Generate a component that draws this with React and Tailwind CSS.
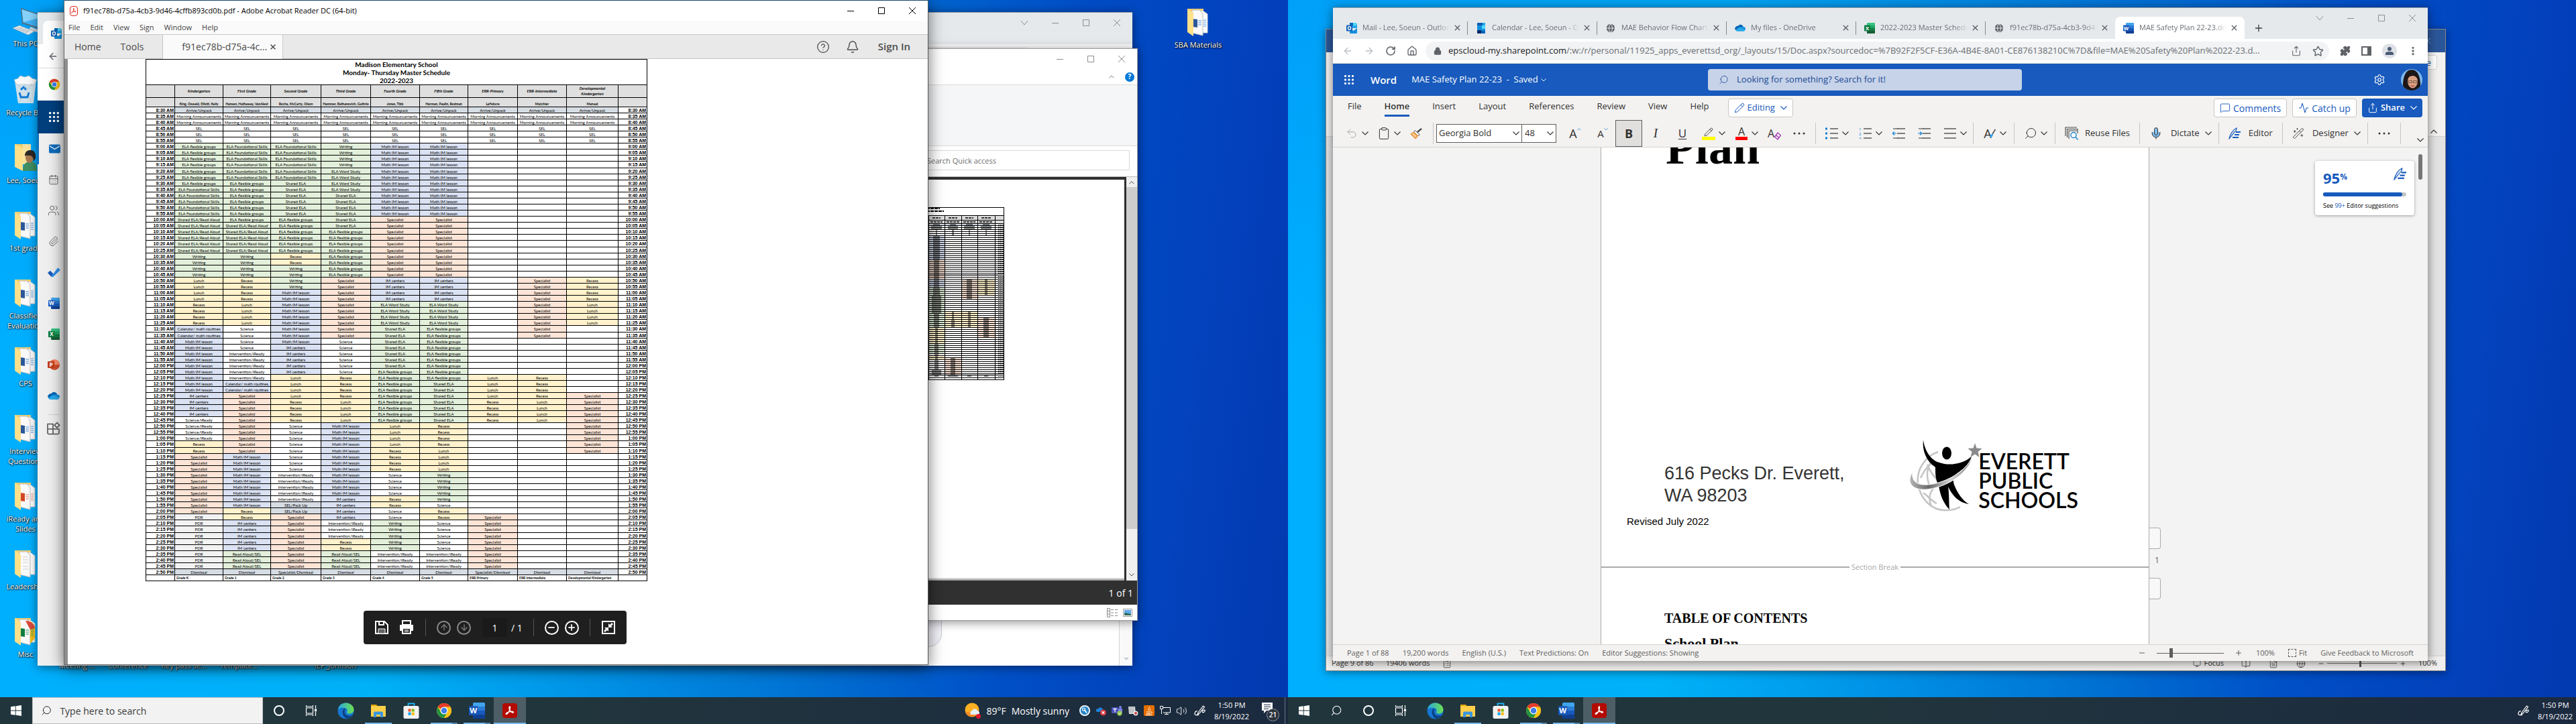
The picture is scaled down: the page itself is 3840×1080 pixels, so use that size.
import React from "react";
import {
  ArrowLeft,
  ArrowRight,
  ArrowUp,
  ArrowDown,
  RotateCw,
  House,
  Lock,
  Star,
  Puzzle,
  EllipsisVertical,
  Settings,
  Bell,
  CircleHelp,
  Paperclip,
  Users,
  Volume2,
  X,
  Plus,
  Minus,
  Search,
  ClipboardList,
  Clipboard,
  Undo2,
  Globe,
  Mic,
  MessageSquare,
  Share,
  Pencil,
  Activity,
  WandSparkles,
  CalendarDays,
  BookOpen,
  FileText,
  Monitor,
} from "lucide-react";
import clsx from "clsx";

/* ---------- schedule data: [label, number of five minute rows] ---------- */

const START = [
  ["Arrive/Unpack", 1],
  ["Morning Announcements", 2],
  ["SEL", 3],
];

const COLUMNS = [
  {
    grade: "Kindergarten",
    staff: "King, Oswald, Elliott, Kelly",
    foot: "Grade K",
    col: "w-[72px]",
    width: 72,
    blocks: [
      ["ELA flexible groups", 7], ["ELA Foundational Skills", 5], ["Shared ELA/Read Aloud", 6],
      ["Writing", 4], ["Lunch", 4], ["Recess", 4], ["Calendar/ math routines", 2],
      ["Math IM lesson", 9], ["IM centers", 4], ["Science/iReady", 4], ["Recess", 2],
      ["Specialist", 10], ["PDR", 9], ["Dismissal", 1],
    ],
  },
  {
    grade: "First Grade",
    staff: "Hansen, Hathaway, VanAlest",
    foot: "Grade 1",
    col: "w-[71px]",
    width: 71,
    blocks: [
      ["ELA Foundational Skills", 6], ["ELA flexible groups", 7], ["Shared ELA/Read Aloud", 5],
      ["Writing", 4], ["Recess", 4], ["Lunch", 4], ["Science", 4], ["Intervention/iReady", 5],
      ["Calendar/ math routines", 2], ["Specialist", 10], ["Math IM lesson", 9], ["Recess", 2],
      ["IM centers", 5], ["Read Aloud/SEL", 3], ["Dismissal", 1],
    ],
  },
  {
    grade: "Second Grade",
    staff: "Rocha, McCarty, Olson",
    foot: "Grade 2",
    col: "w-[75px]",
    width: 75,
    blocks: [
      ["ELA Foundational Skills", 6], ["Shared ELA", 6], ["ELA flexible groups", 6],
      ["Recess", 2], ["Writing", 4], ["Math IM lesson", 9], ["IM centers", 5], ["Lunch", 4],
      ["Recess", 4], ["Science", 8], ["Intervention/iReady", 5], ["SEL/Pack Up", 2],
      ["Specialist", 9], ["Specialist/Dismissal", 1],
    ],
  },
  {
    grade: "Third Grade",
    staff: "Hammer, Bathanovich, Guthrie",
    foot: "Grade 3",
    col: "w-[74px]",
    width: 74,
    blocks: [
      ["Writing", 4], ["ELA Word Study", 4], ["Shared ELA", 6], ["ELA flexible groups", 8],
      ["Specialist", 10], ["Science", 6], ["Recess", 4], ["Lunch", 4], ["Math IM lesson", 12],
      ["IM centers", 4], ["Intervention/iReady", 3], ["Recess", 2], ["Read Aloud/SEL", 3],
      ["Dismissal", 1],
    ],
  },
  {
    grade: "Fourth Grade",
    staff: "Jones, Tibb",
    foot: "Grade 4",
    col: "w-[73px]",
    width: 73,
    blocks: [
      ["Math IM lesson", 12], ["Specialist", 10], ["IM centers", 4], ["ELA Word Study", 4],
      ["Shared ELA", 7], ["ELA flexible groups", 9], ["Lunch", 4], ["Recess", 4],
      ["Science", 4], ["Recess", 2], ["Science", 2], ["Writing", 5],
      ["Intervention/iReady", 3], ["Dismissal", 1],
    ],
  },
  {
    grade: "Fifth Grade",
    staff: "Herman, Paulin, Rodman",
    foot: "Grade 5",
    col: "w-[72px]",
    width: 72,
    blocks: [
      ["Math IM lesson", 12], ["Specialist", 10], ["IM centers", 4], ["ELA Word Study", 4],
      ["ELA flexible groups", 9], ["Shared ELA", 7], ["Recess", 4], ["Lunch", 4],
      ["Writing", 5], ["Science", 1], ["Recess", 2], ["Science", 5],
      ["Intervention/iReady", 3], ["Dismissal", 1],
    ],
  },
  {
    grade: "ERR-Primary",
    staff: "LeFebvre",
    foot: "ERR Primary",
    col: "w-[74px]",
    width: 74,
    blocks: [
      ["", 38], ["Lunch", 4], ["Recess", 4], ["", 15], ["Specialist", 9],
      ["Specialist/Dismissal", 1],
    ],
  },
  {
    grade: "ERR-Intermediate",
    staff: "Mutchler",
    foot: "ERR Intermediate",
    col: "w-[73px]",
    width: 73,
    blocks: [
      ["", 22], ["Specialist", 10], ["", 6], ["Recess", 4], ["Lunch", 4], ["", 24],
      ["Dismissal", 1],
    ],
  },
  {
    grade: "Developmental Kindergarten",
    staff: "Manuel",
    foot: "Developmental Kindergarten",
    col: "w-[77px]",
    width: 77,
    blocks: [
      ["", 22], ["Recess", 4], ["Lunch", 4], ["", 11], ["Specialist", 10], ["", 19],
      ["Dismissal", 1],
    ],
  },
];

const expand = (blocks) =>
  [...START, ...blocks].flatMap(([label, count]) => Array(count).fill(label));

const GRID = COLUMNS.map((c) => expand(c.blocks));

const TIMES = Array.from({ length: 77 }, (_, i) => {
  const total = 8 * 60 + 30 + i * 5;
  const hour = Math.floor(total / 60);
  const minute = String(total % 60).padStart(2, "0");
  return `${hour > 12 ? hour - 12 : hour}:${minute} ${hour >= 12 ? "PM" : "AM"}`;
});

const TALL_ROWS = [9, 22, 36, 55, 69];

const cellStyle = (label) => {
  if (/^(ELA|Shared|Writing|Read)/.test(label)) return ["bg-[#e2efda]", "#e2efda"];
  if (/^(Math|IM|Calendar)/.test(label)) return ["bg-[#d9e1f2]", "#d9e1f2"];
  if (label === "Specialist") return ["bg-[#fce4d6]", "#fce4d6"];
  if (/^(Lunch|Recess)/.test(label)) return ["bg-[#fff2cc]", "#fff2cc"];
  if (/^(Arrive|Dismissal|Specialist\/|SEL\/)/.test(label)) return ["bg-[#d6dce4]", "#d6dce4"];
  if (label === "PDR") return ["bg-[#f2f2f2]", "#f2f2f2"];
  return ["bg-white", "#ffffff"];
};

/* ---------- small drawings ---------- */

const Chevron = ({ className = "w-[10px]", up = false, color = "#333" }) => (
  <svg viewBox="0 0 10 6" className={clsx("shrink-0", className)} fill="none" stroke={color} strokeWidth="1.2">
    <path d={up ? "M.5 5.5 5 1l4.5 4.5" : "M.5.5 5 5 9.5.5"} />
  </svg>
);

const OutlookLogo = ({ className = "w-4 h-4" }) => (
  <svg viewBox="0 0 16 16" className={className}>
    <path d="M5 0h9l2 2v6H5z" fill="#28a8ea" />
    <path d="M5 0h5v4H5z" fill="#0364b8" />
    <path d="M10 0h5v4h-5z" fill="#50d9ff" />
    <path d="M5 8l5.500 4L16 8v7a1 1 0 0 1-1 1H6a1 1 0 0 1-1-1z" fill="#1490df" />
    <rect y="3.500" width="9" height="9" rx="1" fill="#0f5fb4" />
    <ellipse cx="4.500" cy="8" rx="2.100" ry="2.400" fill="none" stroke="#fff" strokeWidth="1.300" />
  </svg>
);

const CalendarLogo = ({ className = "w-4 h-4" }) => (
  <svg viewBox="0 0 16 16" className={className}>
    <rect x="2" y="0" width="12" height="16" rx="1" fill="#1490df" />
    <path d="M2 1a1 1 0 0 1 1-1h7v4H2z" fill="#0f5fb4" />
    <path d="M10 0h3a1 1 0 0 1 1 1v4h-4z" fill="#28a8ea" />
    <path d="M9 4h5v5H9z" fill="#50d9ff" />
    <path d="M2 11h6v5H3a1 1 0 0 1-1-1z" fill="#0a2767" />
    <path d="M8 12h6v3a1 1 0 0 1-1 1H8z" fill="#0364b8" />
  </svg>
);

const OfficeLogo = ({ letter, tones, className = "w-4 h-4" }) => (
  <svg viewBox="0 0 16 16" className={className}>
    <rect x="4" width="12" height="16" rx="1" fill={tones[0]} />
    <rect x="4" y="4" width="12" height="4" fill={tones[1]} />
    <rect x="4" y="8" width="12" height="4" fill={tones[2]} />
    <path d="M4 12h12v3a1 1 0 0 1-1 1H5a1 1 0 0 1-1-1z" fill={tones[3]} />
    <rect y="3.500" width="9" height="9" rx="1" fill={tones[2]} />
    <text x="4.500" y="10.700" textAnchor="middle" fontSize="7.500" fontWeight="700" fill="#fff" fontFamily="Open Sans, sans-serif">
      {letter}
    </text>
  </svg>
);

const WORD_TONES = ["#41a5ee", "#2b7cd3", "#185abd", "#103f91"];
const EXCEL_TONES = ["#33c481", "#21a366", "#107c41", "#185c37"];

const PowerPointLogo = ({ className = "w-4 h-4" }) => (
  <svg viewBox="0 0 16 16" className={className}>
    <circle cx="9" cy="8" r="7" fill="#ed6c47" />
    <path d="M9 1a7 7 0 0 1 7 7H9z" fill="#ff8f6b" />
    <path d="M9 8h7a7 7 0 0 1-13.500 2.500z" fill="#d35230" />
    <rect y="3.500" width="9" height="9" rx="1" fill="#c43e1c" />
    <text x="4.500" y="10.700" textAnchor="middle" fontSize="7.500" fontWeight="700" fill="#fff" fontFamily="Open Sans, sans-serif">P</text>
  </svg>
);

const OneDriveLogo = ({ className = "w-[18px]" }) => (
  <svg viewBox="0 0 18 12" className={className}>
    <path d="M5.500 3.200A4.800 4.800 0 0 1 14.300 4.500L9 9 1 9.500A3.500 3.500 0 0 1 1.600 4.700 4 4 0 0 1 5.500 3.200z" fill="#0364b8" />
    <path d="M6.500 4.500 12 7.500l5.500 2A3.200 3.200 0 0 0 14.400 4.600 4 4 0 0 0 11 4.700z" fill="#1490df" />
    <path d="M1 9.800 6.800 6a4.500 4.500 0 0 1 4 0l6.700 3.700A3.200 3.200 0 0 1 14.800 12H4A3.700 3.700 0 0 1 1 9.800z" fill="#28a8ea" />
  </svg>
);

const ChromeLogo = ({ className = "w-6 h-6" }) => (
  <svg viewBox="0 0 24 24" className={className}>
    <circle cx="12" cy="12" r="11" fill="#fbc116" />
    <path d="M12 12 2.500 6.500A11 11 0 0 1 21.500 6.500H12z" fill="#e33b2e" />
    <path d="M2.500 6.500A11 11 0 0 0 12 23l4.800-8.300L12 12 7.200 14.700z" fill="#229342" />
    <path d="M12 6.500h9.500A11 11 0 0 1 12 23l5-8.500z" fill="#fbc116" />
    <circle cx="12" cy="12" r="5.500" fill="#fff" />
    <circle cx="12" cy="12" r="4.300" fill="#3b7ded" />
  </svg>
);

const EdgeLogo = () => (
  <svg viewBox="0 0 24 24" className="size-[25px]">
    <defs>
      <linearGradient id="edgeTop" x1="0" x2="1">
        <stop offset="0" stopColor="#2aa5e0" />
        <stop offset="1" stopColor="#6be04f" />
      </linearGradient>
    </defs>
    <circle cx="12" cy="12" r="11.500" fill="#1476d2" />
    <path d="M.800 10C2 3.500 7 .500 12 .500c7 0 11.500 5 11.500 9.500 0 4-3 6-6.500 6-3 0-4-1.200-3.500-2.500 1.500-2.500 0-5.500-4-6C6 7 2.500 8 .800 10z" fill="url(#edgeTop)" />
    <path d="M9 9c-3 3-2 11 4.500 14 3.500-.500 6.500-2.500 8.300-5.200-3.300 2-8.500 1.700-10.600-1.300C9.700 14 10 11 11.500 9.500 10.700 9 10 8.800 9 9z" fill="#0c3f7d" />
  </svg>
);

const ExplorerLogo = () => (
  <svg viewBox="0 0 24 24" className="size-6">
    <path d="M1 3h8l2 2.500H1z" fill="#e0a100" />
    <rect x="1" y="5" width="22" height="16" fill="#ffcf4a" />
    <path d="M5 22v-6.500a2 2 0 0 1 2-2h10a2 2 0 0 1 2 2V22h-4v-4H9v4z" fill="#3a96dd" />
  </svg>
);

const StoreLogo = () => (
  <svg viewBox="0 0 24 26" className="h-[26px] w-6">
    <path d="M7.500 7V2.500h9V7" fill="none" stroke="#1fb4f0" strokeWidth="1.800" />
    <rect x=".500" y="6" width="23" height="19" rx="2.500" fill="#f3f3f3" />
    <path d="M7.500 10.500h4v4h-4z" fill="#f25022" />
    <path d="M12.700 10.500h4v4h-4z" fill="#7fba00" />
    <path d="M7.500 15.700h4v4h-4z" fill="#00a4ef" />
    <path d="M12.700 15.700h4v4h-4z" fill="#ffb900" />
  </svg>
);

const AcrobatMark = ({ className, stroke = "#fff" }) => (
  <svg viewBox="0 0 16 16" className={className} fill="none" stroke={stroke} strokeWidth="1.300" strokeLinejoin="round">
    <path d="M7.500 2c1.200-.500 1.300 1.500.500 4C7 9 5 12.500 3.300 13.300c-1.500.700-1.600-1 .500-2.200 2.200-1.300 6.200-2 8.400-1.600 2.200.500 1.300 2.100-.700 1.300C9 9.900 6.800 6.500 7 3.500 7 2.700 7.200 2.200 7.500 2z" />
  </svg>
);

const AcrobatLogo = () => (
  <span className="flex size-[22px] items-center justify-center rounded-[4px] bg-[#b30b00]">
    <AcrobatMark className="size-4" />
  </span>
);

const WindowsLogo = () => (
  <svg viewBox="0 0 16 16" className="size-4" fill="#fff">
    <path d="M0 2.300 6.800 1.300v6.300H0zM7.700 1.200 16 0v7.600H7.700zM0 8.400h6.800v6.300L0 13.700zM7.700 8.400H16V16l-8.300-1.200z" />
  </svg>
);

const TaskViewIcon = () => (
  <svg viewBox="0 0 18 16" className="h-4 w-[18px]" fill="none" stroke="#fff" strokeWidth="1.200">
    <path d="M1.500 4h10v8h-10zM1.500 0v2h10V0M1.500 16v-2h10v2M15.500 0v5M15.500 10v6" />
    <rect x="14.500" y="6.200" width="2" height="2.500" fill="#fff" />
  </svg>
);

const Waffle = ({ className = "size-4" }) => (
  <svg viewBox="0 0 16 16" className={className} fill="#fff">
    {[1, 6.500, 12].map((y) => [1, 6.500, 12].map((x) => <rect key={`${x}-${y}`} x={x} y={y} width="3" height="3" rx="1" />))}
  </svg>
);

const FolderIcon = ({ kind }) => (
  <svg viewBox="0 0 34 44" className="h-11 w-[34px]">
    <path d="M1 2h24v30H1z" fill="#f2ce6c" />
    {kind === "user" ? (
      <>
        <path d="M13 2h12v30H13z" fill="#f9e29c" />
        <path d="M1 2l12 6v34L1 36z" fill="#fde08a" />
        <path d="M13 42c0-11 5-14 12-14s9 5 9 14z" fill="#3f8f63" />
        <ellipse cx="23" cy="22" rx="6" ry="8" fill="#a9774f" />
        <path d="M16 20c0-8 5-9 9-9s8 3 7 12l-3 5c0-6-2-9-6-9-3 0-5-1-7 1z" fill="#2b2725" />
      </>
    ) : (
      <>
        <path d="M10 5h14l7 5v28H10z" fill="#fff" stroke="#c9c9c9" />
        <path d="M8 4h11l5 5v33L8 38z" fill="#fafafa" stroke="#bdbdbd" />
        {kind === "excel" && <path d="M20 6a12 12 0 0 1 11 12v14l-7 8V14z" fill="#fbc116" />}
        {kind === "excel" && <path d="M17 6c8 0 13 4 14 11l-7 2z" fill="#dd4b3e" />}
        {kind === "plain" ? (
          <path d="M13 12h7M13 16h8M13 20h7M13 26h8M13 30h8" stroke="#cfcfcf" />
        ) : (
          <>
            <path
              d="M9 17l7 1v12l-7-1z"
              fill={kind === "ppt" ? "#d24726" : kind === "excel" ? "#107c41" : "#2b579a"}
            />
            <path
              d="M17 20h5M17 23h5M17 26h5M25 19h4M25 22h4M25 25h4M25 28h4"
              stroke={kind === "ppt" ? "#e88b74" : kind === "excel" ? "#3f9d68" : "#4a90e2"}
            />
          </>
        )}
        <path d="M1 2l9 6v35L1 37z" fill="#fde08a" />
      </>
    )}
  </svg>
);

const PcIcon = () => (
  <svg viewBox="0 0 40 42" className="h-[42px] w-10">
    <path d="M13 1l27 9v22l-25-8z" fill="#5b6a76" />
    <path d="M14.500 3 40 11.500V30L16 22.500z" fill="#3fb2f4" />
    <path d="M14.500 3 40 11.500V16L17 22z" fill="#86d2fb" />
    <path d="M28 29l10 4v4l-14-3z" fill="#c8d2d9" />
    <path d="M1 31l10-4 22 9-9 5z" fill="#e4e9ec" stroke="#9aa7b0" strokeWidth=".600" />
    <path d="M5 31l18 7M8 29.500l18 7M10 33l7-4M15 35l8-4M20 37l7-4" stroke="#9aa7b0" strokeWidth=".700" />
  </svg>
);

const RecycleIcon = () => (
  <svg viewBox="0 0 38 44" className="h-11 w-[38px]">
    <path d="M3 9h32l-4 33H8z" fill="#dfe5e8" opacity=".930" />
    <path d="M2 7l6-2 3-4 7 2 6-2 5 4 7 2-4 7H6z" fill="#f7f8f9" stroke="#b9c3c9" strokeWidth=".700" />
    <path d="M7 14l6 6M17 13l5 8M28 13l-4 8M10 40l4-6M27 40l-2-8" stroke="#b4bfc6" strokeWidth=".800" />
    <path d="M12 22l4-4 4 4M10 26l2 7h5M24 26l-2 7h-5" fill="none" stroke="#1478d4" strokeWidth="2.800" />
  </svg>
);

const EditorIcon = ({ className = "size-[18px]" }) => (
  <svg viewBox="0 0 18 18" className={className} fill="none" stroke="#185abd">
    <path d="M1 17C2 11 6 4 12 1c0 3-1 5-3 6-2 2-4 5-8 10z" strokeWidth="1.200" />
    <path d="M11 7h7M9 11h7M6 15h9" strokeWidth="2" />
  </svg>
);

const PenTrayIcon = () => (
  <svg viewBox="0 0 18 18" className="size-[18px]" fill="none" stroke="#fff" strokeWidth="1.200">
    <path d="M6 12 13.500 2l2 1.500L8 13l-3 2zM5 10c-3-1-4 2-4 4s5 2 6 1M12 10c3-3 5-2 4 0s-3 2-4 1" />
  </svg>
);

const EverettLogo = () => (
  <svg viewBox="0 0 110 108" className="h-[108px] w-[110px]">
    <defs>
      <linearGradient id="swoosh" x1="0" x2="1">
        <stop offset="0" stopColor="#b5b5b5" />
        <stop offset=".300" stopColor="#6a6a6a" />
        <stop offset=".650" stopColor="#d5d5d5" />
        <stop offset="1" stopColor="#7a7a7a" />
      </linearGradient>
    </defs>
    <g fill="none" stroke="#c4c4c4" strokeWidth="2.500">
      <path d="M44 19C22 27 12 48 14 66c3 22 20 42 44 40 8 0 14-2 19-5" />
      <path d="M36 30C26 44 26 56 32 72M38 72c-8 10-8 18-4 28M22 80c8 6 12 12 20 16M18 58c6-12 10-18 20-24M28 38c4 12 12 20 18 26" />
    </g>
    <path d="M22 1c2 17 12 31 24 34 14 5 34 3 48-9-5 16-19 22-26 29-2 5-1 9 0 13 5 13 13 24 22 29-15-2-25-13-31-26 2 13 1 24 2 34-9-9-14-22-16-36-5-8-5-18-5-27C26 33 20 16 22 1z" />
    <ellipse cx="57" cy="21" rx="7" ry="9.500" />
    <path d="M6 49C-6 68 10 79 34 74c30-6 54-24 62-48-10 20-34 36-60 41C14 71 4 64 6 49z" fill="url(#swoosh)" stroke="#fff" />
    <path d="M99 6l2.500 7.500 8 .500-6 5 2 8-6.500-4.500L92.500 27l2-8-6-5 8-.500z" fill="#8a8a8a" />
  </svg>
);

/* The explorer preview is too small to read, so each label becomes a dark smudge */
const SchedulePreview = () => {
  const scale = 248 / 747;
  let x = 43;
  const edges = COLUMNS.map((c) => {
    const left = Math.round(x * scale);
    x += c.width;
    return [left, Math.round(x * scale)];
  });
  const rowY = (i) => Math.round(24 + i * 2.98);
  return (
    <svg viewBox="0 0 248 258" className="h-[258px] w-[248px]" shapeRendering="crispEdges">
      <rect x=".5" y=".5" width="247" height="257" fill="#fff" stroke="#000" />
      <rect x="1" y="12" width="246" height="12" fill="#dcdcdc" />
      <path d="M90 2h62M84 6h74" stroke="#000" strokeWidth="2" strokeDasharray="5 1" />
      {edges.map(([l, r], c) =>
        GRID[c].map((label, i) => (
          <g key={`${c}-${i}`}>
            <rect x={l} y={rowY(i)} width={r - l} height="3" fill={cellStyle(label)[1]} />
            {label && (
              <rect
                x={(l + r) / 2 - label.length * 0.36}
                y={rowY(i) + 1}
                width={label.length * 0.72}
                height="2"
                fill="#111"
                opacity=".5"
              />
            )}
          </g>
        ))
      )}
      {TIMES.map((t, i) => (
        <g key={t}>
          <path d={`M0 ${rowY(i) + 0.5}H248`} stroke="#000" />
          <path d={`M5 ${rowY(i) + 2}h8M239 ${rowY(i) + 2}h8`} stroke="#333" strokeDasharray="2 1" />
        </g>
      ))}
      <path d="M0 12.500H248M0 19.500H248M0 254.500H248" stroke="#000" />
      {edges.map(([l, r]) => (
        <g key={l}>
          <path d={`M${l + 0.5} 12V258M${r + 0.5} 12V258`} stroke="#000" />
          <path d={`M${l + 6} 16h${r - l - 12}M${l + 3} 22h${r - l - 6}`} stroke="#333" strokeWidth="2" strokeDasharray="4 1" />
        </g>
      ))}
    </svg>
  );
};

const Caption = ({ active = false, menu = false }) => {
  const stroke = active ? "#000" : "#8a8d90";
  const paths = [
    ...(menu ? [["Search tabs", "M0 2l5 6 5-6"]] : []),
    ["Minimize", "M0 5.500h10"],
    ["Maximize", "M.500.500h9v9h-9z"],
    ["Close", "M0 0l10 10M10 0 0 10"],
  ];
  return (
    <div className="ml-auto flex h-[30px]">
      {paths.map(([name, d]) => (
        <button key={name} aria-label={name} className="flex w-[46px] items-center justify-center">
          <svg viewBox="0 0 10 10" className="size-[10px] overflow-visible" fill="none" stroke={stroke}>
            <path d={d} />
          </svg>
        </button>
      ))}
    </div>
  );
};

/* ---------- desktop ---------- */

const DesktopIcon = ({ label, children }) => (
  <a href="#" className="flex h-[101px] w-[76px] flex-col items-center text-center text-[11px] leading-[15px] text-white [text-shadow:1px_1px_2px_#000,0_0_2px_#000]">
    {children}
    <span className="mt-1">{label}</span>
  </a>
);

const DESKTOP_FOLDERS = [
  ["Lee, Soeun", "user"],
  ["1st grade", "word"],
  ["Classified Evaluation", "word"],
  ["CPS", "word"],
  ["Interview Questions", "word"],
  ["iReady and Slides", "ppt"],
  ["Leadership", "plain"],
  ["Misc", "excel"],
];

const Wallpaper = ({ children }) => (
  <div className="relative min-h-0 flex-1 overflow-hidden bg-[linear-gradient(180deg,rgba(0,60,200,0.12),rgba(0,0,0,0)_50%),linear-gradient(97deg,#00aeff_0%,#00b2f8_33%,#009dec_44%,#0073d4_64%,#004fc6_79%,#0340ba_92%,#0239b0_100%)]">
    {children}
  </div>
);

/* ---------- taskbar ---------- */

const APPS = [
  { name: "Microsoft Edge", icon: <EdgeLogo /> },
  { name: "File Explorer", icon: <ExplorerLogo />, open: true },
  { name: "Microsoft Store", icon: <StoreLogo /> },
  { name: "Google Chrome", icon: <ChromeLogo className="size-6" />, open: true, stacked: true },
  { name: "Word", icon: <OfficeLogo letter="W" tones={WORD_TONES} className="size-6" />, open: true, stacked: true },
  { name: "Adobe Acrobat", icon: <AcrobatLogo />, open: true, active: true },
];

const Clock = () => (
  <button className="flex w-[62px] flex-col items-center justify-center text-[11px] leading-[17px] text-white">
    <span>1:50 PM</span>
    <span>8/19/2022</span>
  </button>
);

const TrayButton = ({ name, children, wide = false }) => (
  <button aria-label={name} className={clsx("flex items-center justify-center", wide ? "w-8" : "w-6")}>
    {children}
  </button>
);

const Taskbar = ({ primary }) => (
  <div className="flex h-10 shrink-0 bg-[linear-gradient(90deg,#21353d,#21353d_45%,#1b2a3f)]">
    <button aria-label="Start" className="flex w-12 items-center justify-center"><WindowsLogo /></button>
    {primary ? (
      <label className="flex w-[344px] items-center gap-3 border border-[#b9bdc0] bg-[#f2f2f2] px-3">
        <Search className="size-[18px] -scale-x-100 text-[#222]" strokeWidth={1.4} />
        <input aria-label="Search" placeholder="Type here to search" className="w-full bg-transparent text-[14px] outline-none placeholder:text-[#3a3a3a]" />
      </label>
    ) : (
      <button aria-label="Search" className="flex w-12 items-center justify-center">
        <Search className="size-[18px] -scale-x-100 text-white" strokeWidth={1.4} />
      </button>
    )}
    <button aria-label="Cortana" className="flex w-12 items-center justify-center">
      <span className="size-4 rounded-full border-2 border-white" />
    </button>
    <button aria-label="Task view" className="flex w-12 items-center justify-center"><TaskViewIcon /></button>
    <div className="ml-[3px] flex gap-px">
      {APPS.map((app) => (
        <button
          key={app.name}
          aria-label={app.name}
          className={clsx("relative flex w-12 items-center justify-center", app.active && "bg-[#4d5e66]")}
        >
          {app.icon}
          {app.open && (
            <span className={clsx("absolute bottom-0 flex h-[2px] bg-[#76b9ed]", app.active ? "inset-x-0" : "inset-x-1")}>
              {app.stacked && <span className="ml-auto w-2 bg-[#5384a8]" />}
            </span>
          )}
        </button>
      ))}
    </div>
    <div className="ml-auto flex">
      {primary && (
        <>
          <button className="mr-[11px] flex items-center gap-2 text-[14px] text-white">
            <svg viewBox="0 0 24 24" className="size-6">
              <circle cx="11" cy="11" r="10.500" fill="#fdb022" />
              <path d="M1 14A10.500 10.500 0 0 0 20 16z" fill="#f58a1f" />
              <path d="M9 18a4 4 0 0 1 2-6 4.500 4.500 0 0 1 8 0 3.500 3.500 0 0 1 2 6z" fill="#e6effc" />
              <circle cx="20.500" cy="20.500" r="3.500" fill="#e0162b" />
            </svg>
            <span>89°F</span>
            <span>Mostly sunny</span>
          </button>
          <TrayButton name="Passwords">
            <svg viewBox="0 0 16 16" className="size-4"><circle cx="8" cy="8" r="8" fill="#fff" /><circle cx="8" cy="8" r="6.200" fill="#2a86c8" /><circle cx="6.500" cy="6" r="2" fill="none" stroke="#fff" strokeWidth="1.200" /><path d="M8 7.500l3 4" stroke="#fff" strokeWidth="1.500" /></svg>
          </TrayButton>
          <TrayButton name="OneDrive">
            <svg viewBox="0 0 16 16" className="size-4"><path d="M1 9a3 3 0 0 1 3-4 4 4 0 0 1 7 1l3 4H2z" fill="#1f7fd4" /><circle cx="11.500" cy="11" r="4.500" fill="#d8343b" /><path d="M9.700 9.200l3.600 3.600M13.300 9.200l-3.600 3.600" stroke="#fff" strokeWidth="1.300" /></svg>
          </TrayButton>
          <TrayButton name="Teams">
            <svg viewBox="0 0 16 16" className="size-4"><rect y="3" width="10" height="9" rx="1" fill="#4b53bc" /><circle cx="13" cy="3" r="2" fill="#7b83eb" /><path d="M10 5h6v6h-6z" fill="#7b83eb" /><path d="M2.500 5.500h5M5 5.500v5" stroke="#fff" strokeWidth="1.300" /><circle cx="12" cy="12" r="3.700" fill="#92c353" /><path d="M10.300 12l1.200 1.300 2.200-2.500" stroke="#fff" fill="none" /></svg>
          </TrayButton>
          <TrayButton name="Safely remove hardware">
            <svg viewBox="0 0 16 16" className="size-4"><path d="M1 2h10l1 11H2z" fill="#d9dcde" /><path d="M2 4h8M2 7h8M3 10h6" stroke="#8d9499" /><circle cx="12" cy="12" r="3.500" fill="#e6e6e6" /><circle cx="12" cy="12" r="2" fill="#d14343" /></svg>
          </TrayButton>
          <TrayButton name="Java">
            <svg viewBox="0 0 16 16" className="size-4"><rect width="16" height="16" rx="2" fill="#e76f00" /><path d="M8 2c2 2-3 3 0 6M10 5c-1 1-1 2 0 3M4 10h7c2 0 2 2 0 2M4 12.500h6M3 14.500h9" stroke="#fff" fill="none" /></svg>
          </TrayButton>
          <TrayButton name="Network">
            <svg viewBox="0 0 16 16" className="size-4" fill="none" stroke="#fff"><path d="M4 3.500h11.500v7.500H5M10 11v2.500M7 13.500h6M.500 1.500h4v4h-4zM2.500 5.500V13" /></svg>
          </TrayButton>
          <TrayButton name="Volume"><Volume2 className="size-[17px] text-white" strokeWidth={1.3} /></TrayButton>
        </>
      )}
      <TrayButton name="Ink workspace" wide><PenTrayIcon /></TrayButton>
      <Clock />
      {primary && (
        <>
          <button aria-label="Notifications, 21 new" className="relative flex w-11 items-center justify-center">
            <svg viewBox="0 0 16 16" className="mb-2 size-4"><path d="M0 0h16v12H7l-4 4v-4H0z" fill="#fff" /><path d="M3 3.500h10M3 6.500h10M3 9.500h7" stroke="#1b2a3f" /></svg>
            <span className="absolute right-1 bottom-1 flex size-[19px] items-center justify-center rounded-full border border-[#8a929c] bg-[#2b323b] text-[10px] font-semibold text-white">21</span>
          </button>
          <span className="ml-1 w-[5px] border-l border-[#6a7480]" />
        </>
      )}
    </div>
  </div>
);

/* ---------- left monitor windows ---------- */

const OutlookWindow = () => (
  <section aria-label="Outlook" className="absolute top-[18px] right-[232px] bottom-[47px] left-[56px] flex flex-col border-t border-[#9aa0a5] bg-white shadow-[0_2px_14px_rgba(0,0,0,0.5)]">
    <div className="flex h-[47px] shrink-0 bg-[#e5e9ec]">
      <div className="mt-3 ml-2 flex w-[190px] rounded-t-lg bg-white pt-[11px] pl-3"><OutlookLogo /></div>
      <Caption menu />
    </div>
    <div className="flex h-9 shrink-0 items-center border-b border-[#dadce0] pl-[15px]">
      <ArrowLeft className="size-4 text-[#5f6368]" />
      <div className="mr-[148px] ml-6 h-7 flex-1 rounded-full bg-[#f1f3f4]" />
    </div>
    <div className="flex h-12 shrink-0 items-center pl-4"><ChromeLogo className="size-[18px]" /></div>
    <div className="flex h-[49px] shrink-0 items-center bg-[#003f7d] pl-4"><Waffle className="size-[17px]" /></div>
    <div className="flex min-h-0 flex-1">
      <nav className="flex w-[48px] flex-col items-center bg-[#efefef] text-[#616161] shadow-[inset_-18px_0_14px_-12px_rgba(0,0,0,0.12)]">
        {[
          <svg viewBox="0 0 18 14" className="h-[14px] w-[17px]"><rect width="18" height="14" rx="2" fill="#0f6cbd" /><path d="M1 2.500l8 5 8-5" fill="none" stroke="#fff" strokeWidth="1.300" /></svg>,
          <CalendarDays className="size-4" strokeWidth={1.5} />,
          <Users className="size-[18px]" strokeWidth={1.3} />,
          <Paperclip className="size-4" strokeWidth={1.4} />,
          <svg viewBox="0 0 20 16" className="h-4 w-[19px]"><path d="M0 9l4-3.500 5 5L5.500 15z" fill="#185abd" /><path d="M5.500 15 16 1l4 3.500L9 15q-2 1.500-3.500 0z" fill="#2f8fe8" /></svg>,
          <OfficeLogo letter="W" tones={WORD_TONES} className="size-[17px]" />,
          <OfficeLogo letter="X" tones={EXCEL_TONES} className="size-[17px]" />,
          <PowerPointLogo className="size-[18px]" />,
          <OneDriveLogo />,
        ].map((icon, i) => (
          <button key={i} aria-label={`Outlook module ${i + 1}`} className={clsx("flex h-[46px] w-full items-center justify-center", i === 0 && "border-l-2 border-[#0f6cbd]")}>
            {icon}
          </button>
        ))}
        <span className="my-[5px] h-px w-4 bg-[#d0d0d0]" />
        <svg viewBox="0 0 20 20" className="mt-[5px] size-5" fill="none" stroke="#555" strokeWidth="1.600">
          <path d="M1 3.500h8v15H3a2 2 0 0 1-2-2zM1 11h17v5.500a2 2 0 0 1-2 2H9M15 1.500l3.700 3.700L15 9l-3.800-3.800z" />
        </svg>
      </nav>
      <div className="flex flex-1 items-end justify-end">
        <div className="mr-[264px] mb-7 h-20 w-[400px] rounded-br-[20px] border border-[#c8c8d0] bg-[#f3f3fa]" />
        <div className="flex h-full w-5 items-end justify-center border-l border-[#d5d5d5] bg-[#faf9f9] pb-2">
          <svg viewBox="0 0 8 4" className="w-2" fill="#c3cdd6"><path d="M0 0h8L4 4z" /></svg>
        </div>
      </div>
    </div>
  </section>
);

const ExplorerWindow = () => (
  <section aria-label="File Explorer" className="absolute top-[72px] right-[224px] bottom-[114px] left-[700px] flex flex-col border border-[#9b9b9b] bg-white text-[12px] shadow-[0_2px_14px_rgba(0,0,0,0.45)]">
    <div className="flex"><Caption /></div>
    <div className="flex h-6 shrink-0 items-center justify-end gap-4 border-b border-[#dadbdc] pr-1">
      <Chevron up className="w-2" color="#777" />
      <span className="flex size-[14px] items-center justify-center rounded-full bg-[#0078d7] text-[10px] font-bold text-white">?</span>
    </div>
    <div className="h-[91px] shrink-0 border-b border-[#dadbdc] bg-[#f5f6f7]" />
    <div className="flex h-[46px] shrink-0 justify-end border-b border-[#bdbdbd] px-[11px] pt-[6px]">
      <input aria-label="Search Quick access" placeholder="Search Quick access" className="h-[30px] w-[311px] border border-[#d9d9d9] pl-2 text-[11px] outline-none placeholder:text-[#6d6d6d]" />
    </div>
    <div className="flex min-h-0 flex-1">
      <div className="flex flex-1 justify-end border-t-4 border-r-[3px] border-[#303030] bg-white pt-[41px] pr-[179px] shadow-[inset_0_-3px_2px_#aaa]">
        <SchedulePreview />
      </div>
      <div className="flex w-4 flex-col items-center bg-[#f0f0f0] py-[6px]">
        <Chevron up className="w-2" color="#444" />
        <span className="mt-1 w-full flex-1 bg-[#cdcdcd]" />
        <span className="h-[66px]" />
        <Chevron className="w-2" color="#444" />
      </div>
    </div>
    <div className="flex h-9 shrink-0 items-center justify-end bg-[#303030] pr-[6px] text-[14px] text-white">1 of 1</div>
    <div className="flex h-[23px] shrink-0 items-center justify-end gap-2 pr-[7px]">
      <svg viewBox="0 0 16 14" className="h-[14px] w-4" fill="none" stroke="#8b8b8b"><path d="M.500.500h4v13h-4zM.500 4.500h4M.500 9h4M6 2.500h4M6 7h4M6 11.500h4M12 2.500h4M12 7h4M12 11.500h4" /></svg>
      <svg viewBox="0 0 14 12" className="h-3 w-[14px]"><path d="M.500.500h13v11H.500z" fill="#fff" stroke="#999" /><path d="M2 2h10v8H2z" fill="#5da9ea" /><path d="M2 6l10 2v2H2z" fill="#2f6b52" /></svg>
    </div>
  </section>
);

const TimeCell = ({ children }) => (
  <th scope="row" className="overflow-hidden border border-black bg-white p-0 pr-[1px] text-right font-['Liberation_Sans',sans-serif] text-[7px] font-bold">
    {children}
  </th>
);

const headCell = "border border-black bg-[#dfdfdf] p-0";

const ScheduleTable = () => (
  <table className="h-fit w-[748px] table-fixed border-collapse font-['Lato',sans-serif] text-[6px] leading-[7px] text-black">
    <colgroup>
      <col className="w-[43px]" />
      {COLUMNS.map((c) => <col key={c.grade} className={c.col} />)}
      <col className="w-[43px]" />
    </colgroup>
    <thead>
      <tr className="h-[38px]">
        <th colSpan={11} className="border border-black bg-white p-0 text-[10px] leading-[12px]">
          Madison Elementary School
          <br />
          Monday- Thursday Master Schedule
          <br />
          2022-2023
        </th>
      </tr>
      <tr className="h-[19px] text-[6px] leading-[8px] italic">
        <th className={headCell} />
        {COLUMNS.map((c) => <th key={c.grade} className={clsx(headCell, "px-1")}>{c.grade}</th>)}
        <th className={headCell} />
      </tr>
      <tr className="h-[14px] text-[5px]">
        <th className={headCell} />
        {COLUMNS.map((c) => <th key={c.staff} className={clsx(headCell, "align-bottom whitespace-nowrap")}>{c.staff}</th>)}
        <th className={headCell} />
      </tr>
    </thead>
    <tbody>
      {TIMES.map((time, i) => (
        <tr key={time} className={TALL_ROWS.includes(i) ? "h-[10px]" : "h-[9px]"}>
          <TimeCell>{time}</TimeCell>
          {GRID.map((column, c) => (
            <td key={c} className={clsx("border border-black p-0 text-center whitespace-nowrap", cellStyle(column[i])[0])}>
              {column[i]}
            </td>
          ))}
          <TimeCell>{time}</TimeCell>
        </tr>
      ))}
      <tr className="h-[9px] text-[5px] font-bold">
        <td className="border border-black p-0" />
        {COLUMNS.map((c) => <td key={c.foot} className="overflow-hidden border border-black p-0 pl-[2px] whitespace-nowrap">{c.foot}</td>)}
        <td className="border border-black p-0" />
      </tr>
    </tbody>
  </table>
);

const PdfDivider = () => <span className="h-[26px] w-px bg-[#555]" />;

const PdfRound = ({ name, dim, children }) => (
  <button aria-label={name} className={clsx("flex size-[21px] items-center justify-center rounded-full border-2", dim ? "border-[#8a8a8a] text-[#8a8a8a]" : "border-white text-white")}>
    {children}
  </button>
);

const PdfToolbar = () => (
  <div className="absolute bottom-[30px] left-[446px] flex h-[50px] items-center rounded bg-[#1f1f1f] px-[17px] text-[14px] text-white">
    <button aria-label="Save">
      <svg viewBox="0 0 20 20" className="size-5" fill="none" stroke="#fff" strokeWidth="2"><path d="M1 1h13l5 5v13H1zM6 1v5h7V1" /><path d="M5 19v-7h10v7z" fill="#666" stroke="#fff" strokeWidth="1" /></svg>
    </button>
    <button aria-label="Print" className="mr-[17px] ml-4">
      <svg viewBox="0 0 22 22" className="size-[22px]"><path d="M5 1h12v6H5z" fill="none" stroke="#fff" strokeWidth="2" /><path d="M1 7h20v9h-3v5H4v-5H1z" fill="#fff" /><path d="M6 13h10v6H6z" fill="#333" /><path d="M8 15h6M8 17h6" stroke="#fff" /></svg>
    </button>
    <PdfDivider />
    <div className="mr-[17px] ml-4 flex gap-[9px]">
      <PdfRound name="Previous page" dim><ArrowUp className="size-[14px]" /></PdfRound>
      <PdfRound name="Next page" dim><ArrowDown className="size-[14px]" /></PdfRound>
    </div>
    <input aria-label="Page number" defaultValue="1" className="h-7 w-[37px] bg-[#1a1a1a] text-center outline-none" />
    <span className="mr-4 ml-[6px]">/ 1</span>
    <PdfDivider />
    <div className="mx-4 flex gap-[9px]">
      <PdfRound name="Zoom out"><Minus className="size-[14px]" strokeWidth={3} /></PdfRound>
      <PdfRound name="Zoom in"><Plus className="size-[14px]" strokeWidth={3} /></PdfRound>
    </div>
    <PdfDivider />
    <button aria-label="Fit page" className="ml-[17px]">
      <svg viewBox="0 0 20 20" className="size-5"><path d="M1 1h18v18H1z" fill="none" stroke="#fff" strokeWidth="2" /><path d="M10 10V4l2 2 3-3 2 2-3 3 2 2zM10 10v6l-2-2-3 3-2-2 3-3-2-2z" fill="#fff" /></svg>
    </button>
  </div>
);

const AcrobatWindow = () => (
  <section aria-label="Adobe Acrobat Reader" className="absolute top-0 right-[536px] bottom-[48px] left-[95px] flex flex-col border border-t-[#17456f] border-r-[#555] border-b-[#666] border-l-[#666] bg-white shadow-[0_4px_22px_rgba(0,0,0,0.55)]">
    <div className="flex h-[30px] shrink-0 items-center pl-2">
      <span className="flex h-[15px] w-3 items-center justify-center rounded-sm border border-[#e2231a]"><AcrobatMark className="size-[10px]" stroke="#e2231a" /></span>
      <h1 className="ml-2 text-[11px] whitespace-nowrap text-black">f91ec78b-d75a-4cb3-9d46-4cffb893cd0b.pdf - Adobe Acrobat Reader DC (64-bit)</h1>
      <Caption active />
    </div>
    <nav className="flex h-[21px] shrink-0 items-center gap-[15px] border-b border-[#c8c8c8] bg-[#fafafa] pl-[6px] text-[11px] text-[#444]">
      {["File", "Edit", "View", "Sign", "Window", "Help"].map((item) => <button key={item}>{item}</button>)}
    </nav>
    <div className="flex h-9 shrink-0 items-center border-b border-[#c8c8c8] bg-[#e9e9e9] text-[14px] text-[#4a4a4a]">
      <button className="ml-[15px]">Home</button>
      <button className="ml-[29px]">Tools</button>
      <div className="ml-7 flex h-9 w-[180px] items-center justify-between border-x border-[#c8c8c8] bg-[#fafafa] pr-2 pl-7">
        <span>f91ec78b-d75a-4c...</span>
        <button aria-label="Close tab"><X className="size-3" strokeWidth={3} /></button>
      </div>
      <div className="ml-auto flex items-center gap-6 pr-[26px]">
        <CircleHelp className="size-5" strokeWidth={1.5} />
        <Bell className="size-5" strokeWidth={1.7} />
        <button className="ml-1 text-[15px] font-semibold">Sign In</button>
      </div>
    </div>
    <div className="flex min-h-0 flex-1">
      <div className="w-[5px] bg-[#8e8e8e]" />
      <div className="pl-[116px]"><ScheduleTable /></div>
    </div>
    <PdfToolbar />
  </section>
);

const LeftMonitor = () => (
  <div className="flex min-w-0 flex-1 flex-col">
    <Wallpaper>
      <div className="flex h-full">
        <div className="flex flex-col pt-[11px]">
          <DesktopIcon label="This PC"><PcIcon /></DesktopIcon>
          <DesktopIcon label="Recycle Bin"><RecycleIcon /></DesktopIcon>
          {DESKTOP_FOLDERS.map(([label, kind]) => (
            <DesktopIcon key={label} label={label}><FolderIcon kind={kind} /></DesktopIcon>
          ))}
        </div>
        <div className="flex items-end gap-5 pb-10 pl-3 text-[11px] leading-[15px] text-white [text-shadow:1px_1px_2px_#000,0_0_2px_#000]">
          <span>Meeting ...</span>
          <span>Conference</span>
          <span>Key pass se...</span>
          <span>Template...</span>
          <span className="ml-16">IEP_Johnson</span>
        </div>
        <div className="mr-24 ml-auto pt-[11px]">
          <DesktopIcon label="SBA Materials"><FolderIcon kind="word" /></DesktopIcon>
        </div>
      </div>
      <OutlookWindow />
      <ExplorerWindow />
      <AcrobatWindow />
    </Wallpaper>
    <Taskbar primary />
  </div>
);

/* ---------- right monitor windows ---------- */

const WordDesktopWindow = () => (
  <section aria-label="Word desktop" className="absolute top-[43px] right-[194px] bottom-[39px] left-[56px] flex flex-col border border-[#8a8a8a] bg-[#e3e3e3] text-[11px] text-[#333] shadow-[0_2px_12px_rgba(0,0,0,0.4)]">
    <div className="flex h-[34px] shrink-0 items-center bg-[#2b579a] pr-[18px]">
      <X className="ml-auto size-4 text-[#b9c6dc]" strokeWidth={1} />
    </div>
    <div className="flex h-[126px] shrink-0 flex-col items-end justify-between border-b border-[#d0d0d0] bg-[#f3f2f1] pt-1 pr-3 pb-1">
      <button className="rounded-sm border border-[#d5d5d5] bg-white px-2 text-[13px] leading-[20px] text-[#2b579a]">Share</button>
      <Chevron up />
    </div>
    <div className="flex-1" />
    <div className="flex h-[22px] shrink-0 items-center gap-[18px] border-t border-[#d0d0d0] bg-[#f0efee] pr-3 pl-2">
      <span>Page 9 of 86</span>
      <span>19406 words</span>
      <ClipboardList className="size-[14px]" strokeWidth={1.3} />
      <span className="ml-auto flex items-center gap-1"><Monitor className="size-3" strokeWidth={1.3} />Focus</span>
      <div className="flex gap-[27px] pl-2">
        <BookOpen className="size-[14px]" strokeWidth={1.3} />
        <FileText className="size-[14px]" strokeWidth={1.3} />
        <Globe className="size-[14px]" strokeWidth={1.3} />
      </div>
      <div className="flex items-center gap-1">
        <Minus className="size-[10px]" />
        <span className="flex h-[10px] w-[104px] items-center bg-[linear-gradient(#777,#777)] bg-[length:100%_1px] bg-center bg-no-repeat pl-12"><span className="h-[10px] w-[3px] bg-[#555]" /></span>
        <Plus className="size-[10px]" />
      </div>
      <span>100%</span>
    </div>
  </section>
);

const TABS = [
  ["Mail - Lee, Soeun - Outlook", <OutlookLogo />],
  ["Calendar - Lee, Soeun - Outlook", <CalendarLogo />],
  ["MAE Behavior Flow Chart", <Globe className="size-4 fill-[#5f6368] text-[#e8eaed]" strokeWidth={1.5} />],
  ["My files - OneDrive", <OneDriveLogo className="w-4" />],
  ["2022-2023 Master Schedule", <OfficeLogo letter="X" tones={EXCEL_TONES} />],
  ["f91ec78b-d75a-4cb3-9d46-4cffb", <Globe className="size-4 fill-[#5f6368] text-[#e8eaed]" strokeWidth={1.5} />],
  ["MAE Safety Plan 22-23.docx", <OfficeLogo letter="W" tones={WORD_TONES} />],
];

const Tab = ({ title, icon, active, last }) => (
  <div className={clsx("flex h-[33px] w-[193px] items-center pr-[9px] pl-3", active ? "rounded-t-lg bg-white" : "relative")}>
    <span className="flex w-4 shrink-0 justify-center">{icon}</span>
    <span className="ml-2 min-w-0 flex-1 overflow-hidden text-[11px] whitespace-nowrap text-[#6a6e73] [mask-image:linear-gradient(90deg,#000_85%,transparent)]">{title}</span>
    <button aria-label={`Close ${title}`} className="ml-[5px]"><X className="size-[13px] text-[#5f6368]" strokeWidth={2.5} /></button>
    {!active && !last && <span className="absolute right-0 h-5 w-px bg-[#84888c]" />}
  </div>
);

const Sep = ({ className = "mx-[10px]" }) => <span className={clsx("h-8 w-px shrink-0 bg-[#c8c6c4]", className)} />;

const Tool = ({ name, drop, active, children }) => (
  <button aria-label={name} className="flex shrink-0 items-center">
    <span className={clsx("flex h-10 items-center justify-center", active ? "w-10 border border-[#605e5c] bg-[#e1dfdd]" : "w-7")}>{children}</span>
    {drop && <Chevron className="mx-px w-[10px]" />}
  </button>
);

const ListIcon = ({ markers, shift = 0, arrow }) => (
  <svg viewBox="0 0 20 18" className="h-[18px] w-5" fill="none" stroke="#333" strokeWidth="1.200">
    {[2, 9, 16].map((y, i) => (
      <g key={y}>
        <path d={`M${7 - shift} ${y}H19`} />
        {markers === "dot" && <rect x="0" y={y - 1.5} width="3" height="3" fill="#0f7fd0" stroke="none" />}
        {markers === "num" && <text x="0" y={y + 2.5} fontSize="6" fill="#0f7fd0" stroke="none">{i + 1}</text>}
      </g>
    ))}
    {arrow && <path d="M1 2h7M1 16h7" />}
    {arrow && <path d={arrow} stroke="#0f7fd0" />}
  </svg>
);

const MoreDots = () => (
  <svg viewBox="0 0 18 4" className="w-[18px]" fill="#333">
    <circle cx="2" cy="2" r="1.500" /><circle cx="9" cy="2" r="1.500" /><circle cx="16" cy="2" r="1.500" />
  </svg>
);

const WordRibbon = () => (
  <div className="shrink-0 border-b border-[#d5d3d1] bg-[#f3f2f1] text-[13px] text-[#323130] shadow-sm">
    <div className="flex h-9 items-center pr-2 pl-[22px]">
      <nav className="flex h-full gap-[34px]">
        {["File", "Home", "Insert", "Layout", "References", "Review", "View", "Help"].map((item) => (
          <button key={item} className={clsx("h-[31px] border-b-[3px] pt-1", item === "Home" ? "border-[#185abd] font-semibold" : "border-transparent")}>
            {item}
          </button>
        ))}
      </nav>
      <button className="ml-7 flex h-7 items-center gap-1 rounded-sm border border-[#c8c6c4] bg-white px-2 font-medium text-[#185abd]">
        <Pencil className="size-4" strokeWidth={1.5} />
        Editing
        <Chevron className="ml-1 w-[10px]" color="#185abd" />
      </button>
      <div className="ml-auto flex gap-2 text-[14px] font-medium text-[#185abd]">
        <button className="flex h-7 items-center gap-1 rounded-sm border border-[#c8c6c4] bg-white px-2">
          <MessageSquare className="size-4" strokeWidth={1.4} />
          Comments
        </button>
        <button className="flex h-7 items-center gap-1 rounded-sm border border-[#c8c6c4] bg-white px-2">
          <Activity className="size-4" strokeWidth={1.6} />
          Catch up
        </button>
        <button className="flex h-7 items-center gap-1 rounded-sm bg-[#185abd] px-2 text-[13px] font-semibold text-white">
          <Share className="size-4" strokeWidth={1.5} />
          Share
          <Chevron className="ml-1 w-[10px]" color="#fff" />
        </button>
      </div>
    </div>
    <div className="flex h-10 items-center pr-[6px] pl-[14px]">
      <div className="flex gap-2">
        <Tool name="Undo" drop><Undo2 className="size-[18px] text-[#a8a6a4]" strokeWidth={1.3} /></Tool>
        <Tool name="Paste" drop><Clipboard className="size-5" strokeWidth={1.2} /></Tool>
        <Tool name="Format painter">
          <svg viewBox="0 0 20 20" className="size-[18px]"><path d="M19 2l-7 6" stroke="#444" strokeWidth="2.500" /><path d="M8 5l8 7-3 2-7-6z" fill="#fff" stroke="#444" /><path d="M6 8l7 6-4 5-8-8z" fill="#f8b25c" stroke="#d9730d" /><path d="M4 10l6 6" stroke="#fff" /></svg>
        </Tool>
      </div>
      <Sep className="mr-1 ml-[11px]" />
      <label className="relative flex h-7 w-[128px] items-center border border-[#605e5c] bg-white">
        <select aria-label="Font" className="w-full appearance-none bg-transparent pl-[3px] outline-none"><option>Georgia Bold</option></select>
        <span className="pointer-events-none absolute right-[3px]"><Chevron /></span>
      </label>
      <label className="relative flex h-7 w-[51px] items-center border border-l-0 border-[#605e5c] bg-white">
        <select aria-label="Font size" className="w-full appearance-none bg-transparent pl-1 outline-none"><option>48</option></select>
        <span className="pointer-events-none absolute right-[3px]"><Chevron /></span>
      </label>
      <div className="ml-[14px] flex gap-[13px]">
        <Tool name="Increase font size"><span className="text-[18px]">A</span><Chevron up className="mb-3 w-[6px]" color="#0f7fd0" /></Tool>
        <Tool name="Decrease font size"><span className="text-[15px]">A</span><Chevron className="mb-3 w-[6px]" color="#0f7fd0" /></Tool>
      </div>
      <div className="ml-[5px] flex">
        <Tool name="Bold" active><b className="text-[18px]">B</b></Tool>
        <span className="flex w-10 justify-center"><Tool name="Italic"><i className="font-['Liberation_Serif',serif] text-[19px]">I</i></Tool></span>
        <span className="flex w-10 justify-center"><Tool name="Underline"><u className="text-[17px] underline-offset-2">U</u></Tool></span>
      </div>
      <div className="ml-[5px] flex gap-[9px]">
        <Tool name="Highlight" drop>
          <span className="flex flex-col items-center border-b-[5px] border-[#ffff00] px-[3px]"><Pencil className="size-[14px]" strokeWidth={1.5} /></span>
        </Tool>
        <Tool name="Font color" drop>
          <span className="border-b-[5px] border-[#ff0000] px-1 text-[16px] leading-[15px]">A</span>
        </Tool>
        <Tool name="Clear formatting">
          <span className="text-[16px]">A</span>
          <svg viewBox="0 0 10 12" className="mt-2 w-[10px]" fill="none" stroke="#a33bb3" strokeWidth="1.300"><path d="M5 1l4.500 4L5 11 .500 7zM2.500 4.500l4.500 4" /></svg>
        </Tool>
        <Tool name="More font options"><MoreDots /></Tool>
      </div>
      <Sep />
      <div className="flex gap-[10px]">
        <Tool name="Bullets" drop><ListIcon markers="dot" /></Tool>
        <Tool name="Numbering" drop><ListIcon markers="num" /></Tool>
        <Tool name="Decrease indent"><ListIcon arrow="M6 9H0M3 6.500 0 9l3 2.500" /></Tool>
        <Tool name="Increase indent"><ListIcon arrow="M0 9h6M3 6.500 6 9l-3 2.500" /></Tool>
        <Tool name="Align" drop><ListIcon shift={6} /></Tool>
      </div>
      <Sep className="mr-[10px] ml-2" />
      <Tool name="Styles" drop>
        <span className="text-[18px]">A</span>
        <svg viewBox="0 0 10 14" className="-ml-1 w-[10px]"><path d="M9.500 1 5 8" stroke="#444" strokeWidth="1.500" /><path d="M1 13c0-4 2-5 5-5 0 4-2 5-5 5z" fill="#3aa0e6" /></svg>
      </Tool>
      <Sep />
      <Tool name="Find" drop><Search className="size-5 -scale-x-100" strokeWidth={1.2} /></Tool>
      <Sep />
      <button className="flex items-center gap-[10px] px-1">
        <svg viewBox="0 0 20 20" className="size-5" fill="none" stroke="#444" strokeWidth="1.100"><path d="M1 14V1h17M3.500 16V3.500H19V10M6 18V6h12" /><circle cx="13" cy="12.500" r="4" fill="#fff" stroke="#0f7fd0" strokeWidth="1.300" /><path d="M16 15.500l3.500 4" stroke="#0f7fd0" strokeWidth="1.300" /></svg>
        Reuse Files
      </button>
      <Sep />
      <button className="flex items-center gap-3 pl-1">
        <Mic className="size-5 fill-[#83beec]" strokeWidth={1.2} />
        Dictate
        <Chevron className="-ml-1 w-[10px]" />
      </button>
      <Sep />
      <button className="flex items-center gap-3 px-1"><EditorIcon />Editor</button>
      <Sep />
      <button className="flex items-center gap-3 pl-1">
        <WandSparkles className="size-[18px]" strokeWidth={1.2} />
        Designer
        <Chevron className="-ml-1 w-[10px]" />
      </button>
      <Sep />
      <Tool name="More commands"><MoreDots /></Tool>
      <Sep />
      <span className="mt-5 ml-auto"><Chevron /></span>
    </div>
  </div>
);

const WordDocument = () => (
  <main className="relative flex min-h-0 flex-1 overflow-hidden bg-[#f3f3f3] pl-[399px]">
    <article className="flex w-[818px] shrink-0 flex-col border-x border-[#ababab] bg-white font-['Liberation_Sans',sans-serif] text-black">
      <h2 className="-mt-[36px] pl-[96px] font-['Liberation_Serif',serif] text-[72px] leading-[72px] font-bold">Plan</h2>
      <div className="mt-[399px] flex justify-between pr-[105px] pl-[94px]">
        <p className="mt-[35px] text-[27px] leading-[33px] text-[#333]">
          616 Pecks Dr. Everett,
          <br />
          WA 98203
        </p>
        <div className="flex">
          <EverettLogo />
          <p className="mt-[18px] -ml-[6px] font-['Lato',sans-serif] text-[32px] leading-[29px] font-semibold">
            EVERETT
            <br />
            PUBLIC
            <br />
            SCHOOLS
          </p>
        </div>
      </div>
      <p className="mt-[6px] pl-[38px] text-[15px] leading-[18px]">Revised July 2022</p>
      <div className="mt-[51px] flex items-center gap-[3px] font-['Open_Sans',sans-serif] text-[11px] leading-[16px] text-[#a8a8a8]">
        <span className="h-[2px] flex-1 bg-[#ababab]" />
        Section Break
        <span className="h-[2px] flex-1 bg-[#ababab]" />
      </div>
      <h3 className="mt-[57px] pl-[94px] font-['Liberation_Serif',serif] text-[20px] leading-[22px] font-bold">TABLE OF CONTENTS</h3>
      <h3 className="mt-[15px] shrink-0 pl-[94px] font-['Liberation_Serif',serif] text-[22px] leading-[24px] font-bold">School Plan</h3>
    </article>
    <div className="flex flex-col pt-[567px] text-[12px] text-[#666]">
      <span className="h-8 w-[17px] rounded-r-sm border border-l-0 border-[#ababab] bg-[#f8f8f8]" />
      <span className="h-[43px] pt-2 pl-2">1</span>
      <span className="h-8 w-[17px] rounded-r-sm border border-l-0 border-[#ababab] bg-[#f8f8f8]" />
    </div>
    <aside className="mt-5 mr-[6px] ml-auto h-[81px] w-[148px] rounded bg-white px-3 pt-[10px] shadow-[0_1px_4px_rgba(0,0,0,0.35)]">
      <div className="flex justify-between">
        <p className="text-[22px] leading-[30px] font-bold text-[#185abd]">95<sup className="text-[12px]">%</sup></p>
        <EditorIcon className="size-[19px]" />
      </div>
      <div className="mt-[7px] flex h-[6px] rounded-full bg-[#c4c4c4]"><span className="w-[95%] rounded-full bg-[#185abd]" /></div>
      <p className="mt-[6px] text-[9px] leading-4 whitespace-nowrap">See <span className="text-[#185abd]">99+</span> Editor suggestions</p>
    </aside>
    <span className="mt-[10px] mr-2 h-[38px] w-[6px] rounded-full bg-[#767676]" />
  </main>
);

const ChromeWindow = () => (
  <section aria-label="Google Chrome" className="absolute top-[11px] right-[221px] bottom-[54px] left-[67px] flex flex-col border-t border-[#9aa0a5] bg-white shadow-[0_2px_14px_rgba(0,0,0,0.5)]">
    <div className="flex h-[46px] shrink-0 bg-[#e6e9ec] pl-2">
      <div className="flex items-end">
        {TABS.map(([title, icon], i) => (
          <Tab key={title} title={title} icon={icon} active={i === 6} last={i === 5} />
        ))}
        <button aria-label="New tab" className="mb-2 ml-[13px]"><Plus className="size-4 text-[#3c4043]" /></button>
      </div>
      <Caption menu />
    </div>
    <div className="flex h-[37px] shrink-0 items-center gap-4 border-b border-[#dadce0] pr-[14px] pl-[14px] text-[#5f6368]">
      <ArrowLeft className="size-4 text-[#bdc1c6]" />
      <ArrowRight className="size-4 text-[#bdc1c6]" />
      <RotateCw className="size-4" strokeWidth={2.4} />
      <House className="size-4" />
      <div className="-ml-1 flex h-7 min-w-0 flex-1 items-center rounded-full bg-[#f1f3f4] pr-2 pl-3">
        <Lock className="size-3 shrink-0 fill-[#5f6368]" strokeWidth={2.5} />
        <p className="ml-[10px] truncate text-[13px] text-[#6a6e73]">
          <span className="text-[#202124]">epscloud-my.sharepoint.com</span>
          /:w:/r/personal/11925_apps_everettsd_org/_layouts/15/Doc.aspx?sourcedoc=%7B92F2F5CF-E36A-4B4E-8A01-CE876138210C%7D&amp;file=MAE%20Safety%20Plan%2022-23.d...
        </p>
        <Share className="ml-auto size-4 shrink-0" strokeWidth={1.6} />
        <Star className="ml-4 size-[17px] shrink-0" />
      </div>
      <Puzzle className="size-4 shrink-0 fill-[#5f6368]" />
      <span className="h-[14px] w-[15px] shrink-0 border-2 border-r-[6px] border-[#5f6368]" />
      <span className="flex size-[22px] shrink-0 items-center justify-center rounded-full bg-[#dee1e6]">
        <svg viewBox="0 0 12 12" className="size-3" fill="#4a5a75"><circle cx="6" cy="3" r="3" /><path d="M0 12V9.500Q0 7 6 7t6 2.500V12z" /></svg>
      </span>
      <EllipsisVertical className="size-4 shrink-0" strokeWidth={3} />
    </div>
    <header className="flex h-12 shrink-0 items-center bg-[#185abd] pr-2 pl-4 text-white">
      <Waffle />
      <b className="ml-6 text-[15px] font-semibold">Word</b>
      <span className="ml-[22px] text-[13px]">MAE Safety Plan 22-23 &nbsp;-&nbsp; Saved</span>
      <span className="ml-1"><Chevron className="w-2" color="#fff" /></span>
      <label className="absolute left-[559px] flex h-8 w-[468px] items-center gap-3 rounded-sm bg-[#c7d3e9] pl-4 text-[#1b4a94]">
        <Search className="size-4 -scale-x-100" strokeWidth={1.3} />
        <input aria-label="Search document" placeholder="Looking for something? Search for it!" className="w-full bg-transparent text-[13px] outline-none placeholder:text-[#1b4a94]" />
      </label>
      <Settings className="ml-auto size-[18px]" strokeWidth={1.6} />
      <svg viewBox="0 0 32 32" className="ml-[23px] size-8">
        <defs><clipPath id="avatar"><circle cx="16" cy="16" r="16" /></clipPath></defs>
        <g clipPath="url(#avatar)">
          <path d="M0 0h32v32H0z" fill="#7fb8ec" />
          <path d="M3 32C2 14 6 1 16 1s14 12 13 31z" fill="#1d1717" />
          <ellipse cx="17.500" cy="18.500" rx="7.500" ry="10" fill="#d9a283" />
          <path d="M10 13q5-8 8-7 5 1 7 8-4-4-7-4-4 0-8 3z" fill="#1d1717" />
          <path d="M11 17.500h5.500v3H11zM18.500 17.500H24v3h-5.500z" fill="none" stroke="#6b4a3c" strokeWidth=".800" />
          <path d="M14.500 24.500q3 2.500 6 0" stroke="#b8474c" strokeWidth="1.300" fill="none" />
        </g>
      </svg>
    </header>
    <WordRibbon />
    <WordDocument />
    <footer className="flex h-[25px] shrink-0 items-center gap-5 border-t border-[#d5d3d1] bg-[#f3f2f1] pr-[21px] pl-[21px] text-[11px] text-[#605e5c]">
      <span>Page 1 of 88</span>
      <span>19,200 words</span>
      <span>English (U.S.)</span>
      <span>Text Predictions: On</span>
      <span>Editor Suggestions: Showing</span>
      <div className="ml-auto flex items-center gap-4">
        <button aria-label="Zoom out"><Minus className="size-3" /></button>
        <input
          type="range"
          aria-label="Zoom"
          min="10"
          max="500"
          defaultValue="110"
          className="h-4 w-[100px] appearance-none bg-[linear-gradient(#605e5c,#605e5c)] bg-[length:100%_1px] bg-center bg-no-repeat [&::-webkit-slider-thumb]:h-[14px] [&::-webkit-slider-thumb]:w-[5px] [&::-webkit-slider-thumb]:appearance-none [&::-webkit-slider-thumb]:bg-[#605e5c]"
        />
        <button aria-label="Zoom in"><Plus className="size-3" /></button>
      </div>
      <span>100%</span>
      <span className="flex items-center gap-1"><span className="size-3 border border-dashed border-[#605e5c]" />Fit</span>
      <a href="#">Give Feedback to Microsoft</a>
    </footer>
  </section>
);

const RightMonitor = () => (
  <div className="flex min-w-0 flex-1 flex-col">
    <Wallpaper>
      <WordDesktopWindow />
      <ChromeWindow />
    </Wallpaper>
    <Taskbar />
  </div>
);

export default function App() {
  return (
    <div className="flex h-screen w-full overflow-hidden font-['Open_Sans',sans-serif]">
      <LeftMonitor />
      <RightMonitor />
    </div>
  );
}
